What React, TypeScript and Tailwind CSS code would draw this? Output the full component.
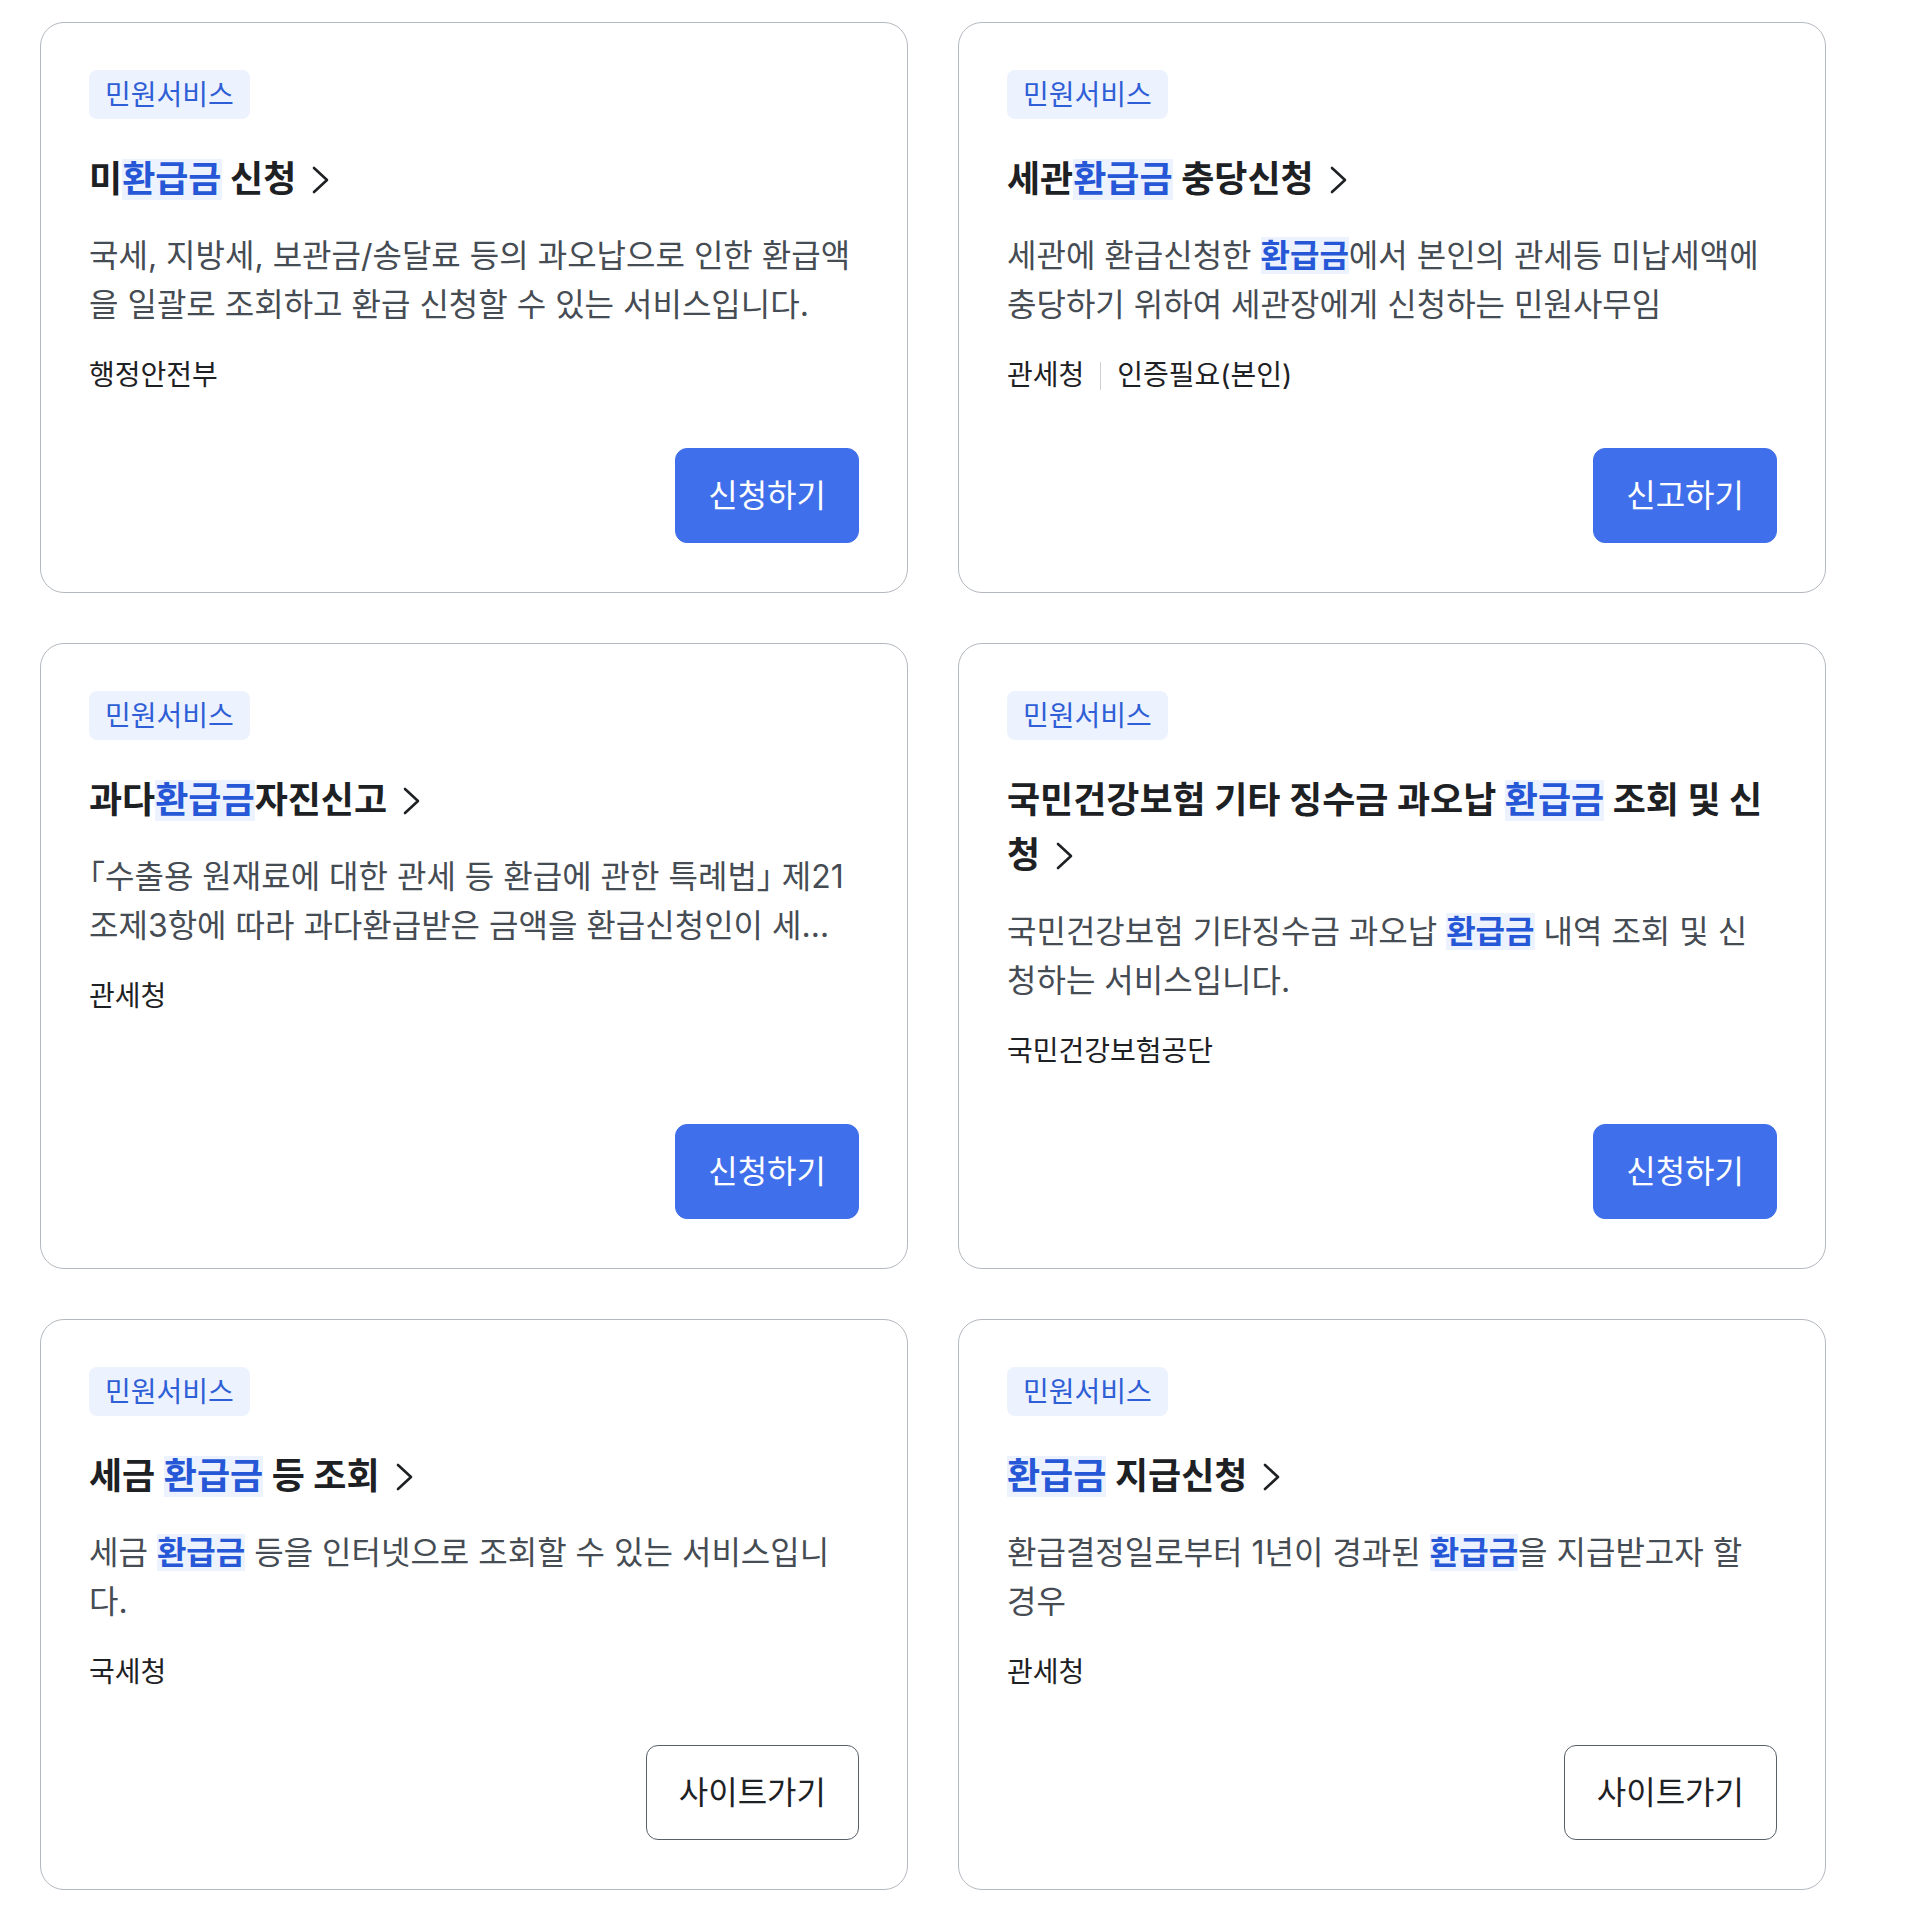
import React from "react";

type Part = string | { hl: string } | { p: string };

type Card = {
  title: Part[];
  desc: Part[];
  org: string[];
  button: string;
  primary: boolean;
  clamp?: boolean;
};

const cards: Card[] = [
  {
    title: ["미", { hl: "환급금" }, " 신청"],
    desc: ["국세, 지방세, 보관금/송달료 등의 과오납으로 인한 환급액을 일괄로 조회하고 환급 신청할 수 있는 서비스입니다."],
    org: ["행정안전부"],
    button: "신청하기",
    primary: true,
  },
  {
    title: ["세관", { hl: "환급금" }, " 충당신청"],
    desc: ["세관에 환급신청한 ", { hl: "환급금" }, "에서 본인의 관세등 미납세액에 충당하기 위하여 세관장에게 신청하는 민원사무임"],
    org: ["관세청", "인증필요(본인)"],
    button: "신고하기",
    primary: true,
  },
  {
    title: ["과다", { hl: "환급금" }, "자진신고"],
    desc: [
      { p: "「" },
      "수출용 원재료에 대한 관세 등 환급에 관한 특례법",
      { p: "」" },
      " 제21조제3항에 따라 과다환급받은 금액을 환급신청인이 세관장에게 자진하여 신고하는 민원사무",
    ],
    org: ["관세청"],
    button: "신청하기",
    primary: true,
    clamp: true,
  },
  {
    title: ["국민건강보험 기타 징수금 과오납 ", { hl: "환급금" }, " 조회 및 신청"],
    desc: ["국민건강보험 기타징수금 과오납 ", { hl: "환급금" }, " 내역 조회 및 신청하는 서비스입니다."],
    org: ["국민건강보험공단"],
    button: "신청하기",
    primary: true,
  },
  {
    title: ["세금 ", { hl: "환급금" }, " 등 조회"],
    desc: ["세금 ", { hl: "환급금" }, " 등을 인터넷으로 조회할 수 있는 서비스입니다."],
    org: ["국세청"],
    button: "사이트가기",
    primary: false,
  },
  {
    title: [{ hl: "환급금" }, " 지급신청"],
    desc: ["환급결정일로부터 1년이 경과된 ", { hl: "환급금" }, "을 지급받고자 할 경우"],
    org: ["관세청"],
    button: "사이트가기",
    primary: false,
  },
];

const Rich = ({ parts, hlClass }: { parts: Part[]; hlClass: string }) => (
  <>
    {parts.map((part, i) => {
      if (typeof part === "string") return <React.Fragment key={i}>{part}</React.Fragment>;
      if ("hl" in part)
        return (
          <span key={i} className={hlClass}>
            {part.hl}
          </span>
        );
      return (
        <span key={i} className="[font-feature-settings:'halt']">
          {part.p}
        </span>
      );
    })}
  </>
);

const Chevron = () => (
  <svg
    width="22"
    height="30"
    viewBox="0 0 22 30"
    fill="none"
    stroke="#1e2124"
    strokeWidth="2.6"
    strokeLinecap="round"
    strokeLinejoin="round"
    className="inline-block align-[-3px] ml-[14px]"
  >
    <path d="M4 3 L17 15 L4 27" />
  </svg>
);

const ServiceCard = ({ card }: { card: Card }) => (
  <div className="flex flex-col bg-white border-[1.5px] border-[#b4b9bf] rounded-[24px] px-[48px] pt-[47px] pb-[49px]">
    <div>
      <span className="inline-flex items-center h-[49px] px-4 rounded-[8px] bg-[#ecf2fe] text-[#2f5fd6] text-[28px]">
        민원서비스
      </span>
    </div>
    <h3 className="mt-[33px] text-[36px] leading-[55px] font-bold text-[#1e2124]">
      <Rich parts={card.title} hlClass="inline-block leading-[41px] bg-[#ecf2fe] text-[#2657d6]" />
      <Chevron />
    </h3>
    <p className={`mt-[24px] pr-[4px] text-[32px] leading-[49px] text-[#464c53] ${card.clamp ? "line-clamp-2" : ""}`}>
      <Rich parts={card.desc} hlClass="inline-block leading-[37px] font-bold bg-[#ecf2fe] text-[#2657d6]" />
    </p>
    <div className="mt-[27px] flex items-center text-[28px] leading-[39px] text-[#1e2124]">
      {card.org.map((o, i) => (
        <React.Fragment key={i}>
          {i > 0 && <span className="mx-4 w-px h-[28px] bg-[#cdd1d5]" />}
          <span>{o}</span>
        </React.Fragment>
      ))}
    </div>
    <div className="mt-auto pt-[53px] flex justify-end">
      {card.primary ? (
        <button className="h-[95px] px-8 rounded-[12px] border-[1.5px] border-[#3f6fea] bg-[#3f6fea] text-white text-[32px]">
          {card.button}
        </button>
      ) : (
        <button className="h-[95px] px-8 rounded-[12px] border-[1.5px] border-[#58606a] bg-white text-[#1e2124] text-[32px]">
          {card.button}
        </button>
      )}
    </div>
  </div>
);

const App = () => {
  return (
    <main className="min-h-screen bg-white pl-[40px] pt-[22px] pb-[30px] font-['Inter','Noto_Sans_CJK_KR',sans-serif]">
      <div className="w-[1786px] grid grid-cols-2 gap-[50px]">
        {cards.map((card, i) => (
          <ServiceCard key={i} card={card} />
        ))}
      </div>
    </main>
  );
};

export default App;
